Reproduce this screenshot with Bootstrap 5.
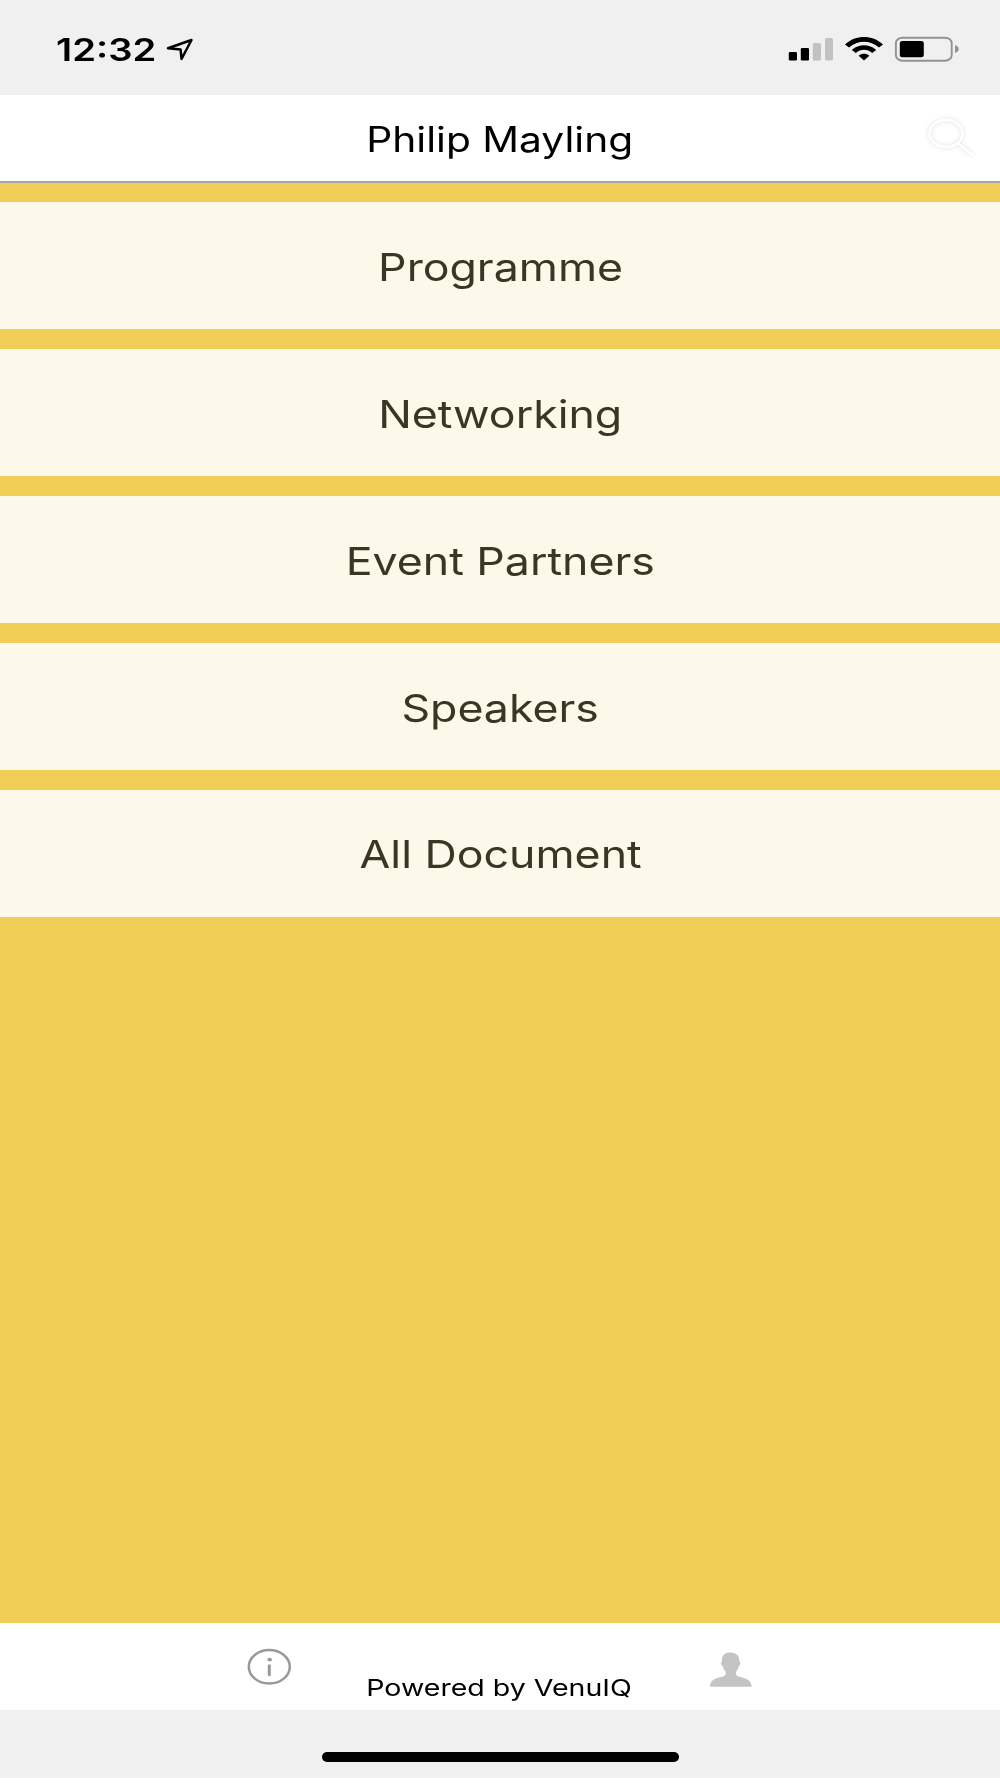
<!DOCTYPE html>
<html lang="en">
<head>
<meta charset="utf-8">
<meta name="viewport" content="width=device-width, initial-scale=1">
<title>VenuIQ</title>
<link href="https://cdn.jsdelivr.net/npm/bootstrap@5.3.0/dist/css/bootstrap.min.css" rel="stylesheet">
<style>
body{font-family:Inter,"Liberation Sans",sans-serif;background:#f0f0f0;color:#000}
.app-screen{height:1778px;width:1000px;overflow:hidden}
/* Wide lettering used across the whole app */
.wide-text{display:inline-block;white-space:nowrap;line-height:1;transform:scaleX(1.16)}
.status-strip{height:95px;padding:36px 39px 0 57px}
.status-strip .clock-text{font-size:31px;font-weight:600;transform:scaleX(1.234);transform-origin:left;margin:-2px 28px 0 -1px}
.title-strip{height:88px;border-bottom:2px solid #a6a6a4;padding-top:3px}
.title-strip .wide-text{font-size:35px;transform:scaleX(1.163)}
.search-btn{right:20px;top:15px;line-height:0}
.search-btn svg{filter:drop-shadow(0 0 2px rgba(0,0,0,.14))}
.menu-area{background:#f1ce55;padding-top:19.4px;gap:19.8px}
.menu-tile{height:127px;background:#fcf8ea;color:#3b3524;font-size:38.5px;padding:3px 0 0 1px}
.menu-tile:hover{color:#3b3524}
.foot-strip{height:87px;padding-left:247px}
.foot-strip .wide-text{font-size:23px;transform:scaleX(1.24);margin:54px 102px 0 100px}
.foot-icon{margin-top:22px;line-height:0}
.home-zone{height:68px;padding-bottom:16px}
.home-bar{width:357px;height:10px;background:#000}
</style>
<script src="https://cdn.jsdelivr.net/npm/bootstrap@5.3.0/dist/js/bootstrap.bundle.min.js"></script>
</head>
<body>
<div class="app-screen d-flex flex-column">
  <div class="status-strip d-flex align-items-start">
    <span class="clock-text wide-text">12:32</span>
    <svg width="30" height="26" viewBox="165 36 30 26" aria-hidden="true"><path d="M191.5 40L168 48.3l12.6 1.2.9 9.5z" fill="none" stroke="#000" stroke-width="2.5" stroke-linejoin="round"/></svg>
    <svg class="ms-auto" width="175" height="26" viewBox="786 36 175 26" aria-hidden="true">
      <rect x="788.8" y="52" width="8.2" height="8.5" rx="1.3"/>
      <rect x="800.8" y="48" width="8.2" height="12.5" rx="1.3"/>
      <rect x="812.8" y="43" width="8.2" height="17.5" rx="1.6" fill="#c2c2c2"/>
      <rect x="825" y="38" width="8" height="22.5" rx="1.6" fill="#c2c2c2"/>
      <path d="M845 44.4C856 34.6 872 34.6 883 44.4L879 47.4C870 39.9 858 39.9 849 47.4zM851.8 50C859 43.8 869 43.8 876.2 50L872.2 53C867 48.8 861 48.8 855.8 53zM858.6 55.7C862 53.2 866 53.2 869.4 55.7L864 60.5z"/>
      <rect x="895.9" y="37.7" width="55.8" height="23" rx="6.5" ry="5.5" fill="none" stroke="#929292" stroke-width="1.9"/>
      <rect x="899.8" y="41" width="24" height="16.3" rx="2.5"/>
      <path d="M955 45c5 1.5 5 6.5 0 8z" fill="#929292"/>
    </svg>
  </div>
  <header class="title-strip bg-white position-relative d-flex align-items-center justify-content-center">
    <span class="wide-text">Philip Mayling</span>
    <a class="search-btn position-absolute" aria-label="Search"><svg width="56" height="50" viewBox="924 110 56 50"><g fill="none" stroke="#fff" stroke-width="2.6"><ellipse cx="946" cy="133.5" rx="16.5" ry="13.5"/><path d="M958 143.5L973 155.5"/></g></svg></a>
  </header>
  <main class="menu-area flex-grow-1 d-flex flex-column">
    <a class="menu-tile d-flex align-items-center justify-content-center text-decoration-none"><span class="wide-text">Programme</span></a>
    <a class="menu-tile d-flex align-items-center justify-content-center text-decoration-none"><span class="wide-text">Networking</span></a>
    <a class="menu-tile d-flex align-items-center justify-content-center text-decoration-none"><span class="wide-text">Event Partners</span></a>
    <a class="menu-tile d-flex align-items-center justify-content-center text-decoration-none"><span class="wide-text">Speakers</span></a>
    <a class="menu-tile d-flex align-items-center justify-content-center text-decoration-none"><span class="wide-text">All Document</span></a>
  </main>
  <footer class="foot-strip bg-white d-flex align-items-start">
    <a class="foot-icon" aria-label="Information"><svg width="45" height="44" viewBox="247 1645 45 44"><ellipse cx="269.3" cy="1666.8" rx="20.5" ry="16.7" fill="none" stroke="#999" stroke-width="2.5"/><ellipse cx="269.7" cy="1659.6" rx="2.3" ry="1.9" fill="#999"/><path d="M269.3 1665.8v9" stroke="#999" stroke-width="3" stroke-linecap="round"/></svg></a>
    <span class="wide-text">Powered by VenuIQ</span>
    <a class="foot-icon" aria-label="Profile"><svg width="46" height="44" viewBox="708 1645 46 44"><path d="M709.8 1686.8C710.5 1679.7 715 1678.5 721 1677C725 1676 726.3 1674.7 725.6 1671.7C723.8 1669.7 723.2 1668 722.8 1666.2C720.8 1665.7 720.8 1662 722 1661.2C721.5 1655.5 724.5 1652.8 729 1652.5C735.5 1652.2 740 1655.5 739.3 1661.2C741 1662.2 740.5 1665.7 738.7 1666.2C738.2 1668.2 737.5 1669.9 736 1671.7C735.3 1674.7 736.5 1676 740.5 1677C746.5 1678.5 751 1679.7 751.8 1686.8Z" fill="#c4c4c4"/></svg></a>
  </footer>
  <div class="home-zone d-flex align-items-end justify-content-center"><div class="home-bar rounded-pill"></div></div>
</div>
</body>
</html>
